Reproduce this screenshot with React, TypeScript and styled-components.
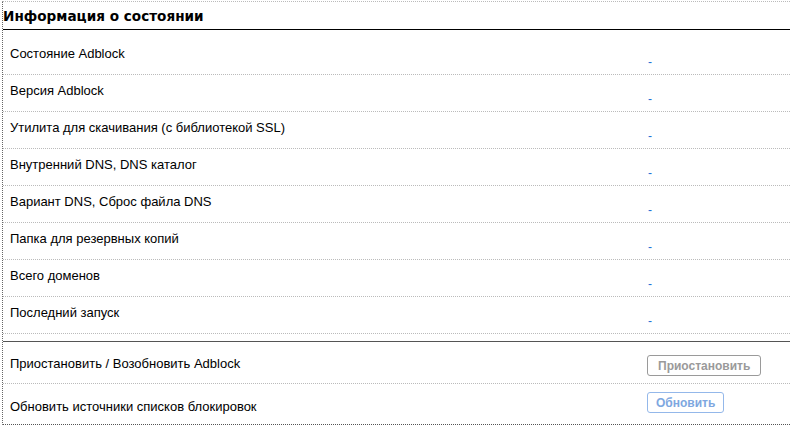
import styled, { createGlobalStyle } from 'styled-components';

const GlobalStyle = createGlobalStyle`
  html, body {
    margin: 0;
    padding: 0;
    background: #fff;
  }
  body {
    font-family: 'Liberation Sans', Arial, sans-serif;
    font-size: 13px;
    color: #000;
    overflow: hidden;
  }
`;

const Panel = styled.div`
  margin: 1px 0 0 2px;
  border-top: 1px dotted #bbb;
  border-left: 1px dotted #666;
  border-bottom: 1px dotted #555;
`;

const Header = styled.h2`
  margin: 0;
  height: 27px;
  line-height: 28px;
  font-family: 'DejaVu Sans', Verdana, sans-serif;
  font-size: 13.6px;
  font-weight: bold;
  color: #000;
  border-bottom: 1px solid #000;
`;

const Section = styled.div<{ $divider?: boolean }>`
  margin-top: ${(p) => (p.$divider ? '7px' : '8px')};
  border-top: ${(p) => (p.$divider ? '1px solid #555' : 'none')};
`;

const Row = styled.div<{ $height: number; $last?: boolean }>`
  display: grid;
  grid-template-columns: 637px 1fr;
  height: ${(p) => p.$height}px;
  border-bottom: ${(p) => (p.$last ? 'none' : '1px dotted #bbb')};
`;

const Label = styled.div<{ $top: number }>`
  padding: ${(p) => p.$top}px 0 0 7px;
  line-height: 15px;
  color: #000;
`;

const Value = styled.div<{ $top: number }>`
  padding: ${(p) => p.$top}px 0 0 8px;
  line-height: 14px;
  font-size: 12px;
`;

const DashLink = styled.a`
  color: #1d6fd6;
  text-decoration: none;
`;

const ActionCell = styled.div<{ $top: number }>`
  padding: ${(p) => p.$top}px 0 0 7px;
`;

const ActionButton = styled.button<{ $tone: 'gray' | 'blue' }>`
  height: 21px;
  padding: 0 ${(p) => (p.$tone === 'gray' ? '10px' : '8px')};
  font-family: 'Liberation Sans', Arial, sans-serif;
  font-size: 12px;
  font-weight: bold;
  background: #fff;
  border-radius: 3px;
  border: 1px solid ${(p) => (p.$tone === 'gray' ? '#9a9a9a' : '#94b8ea')};
  color: ${(p) => (p.$tone === 'gray' ? '#9a9a9a' : '#7ea7e0')};
  cursor: default;
`;

const statusRows = [
  'Состояние Adblock',
  'Версия Adblock',
  'Утилита для скачивания (с библиотекой SSL)',
  'Внутренний DNS, DNS каталог',
  'Вариант DNS, Сброс файла DNS',
  'Папка для резервных копий',
  'Всего доменов',
  'Последний запуск',
];

const App = () => {
  return (
    <>
      <GlobalStyle />
      <Panel>
        <Header>Информация о состоянии</Header>
        <Section>
          {statusRows.map((label) => (
            <Row key={label} $height={36}>
              <Label $top={8}>{label}</Label>
              <Value $top={17}>
                <DashLink href="#">-</DashLink>
              </Value>
            </Row>
          ))}
        </Section>
        <Section $divider>
          <Row $height={41}>
            <Label $top={14}>Приостановить / Возобновить Adblock</Label>
            <ActionCell $top={13}>
              <ActionButton $tone="gray" disabled>
                Приостановить
              </ActionButton>
            </ActionCell>
          </Row>
          <Row $height={40} $last>
            <Label $top={15}>Обновить источники списков блокировок</Label>
            <ActionCell $top={8}>
              <ActionButton $tone="blue" disabled>
                Обновить
              </ActionButton>
            </ActionCell>
          </Row>
        </Section>
      </Panel>
    </>
  );
};

export default App;
